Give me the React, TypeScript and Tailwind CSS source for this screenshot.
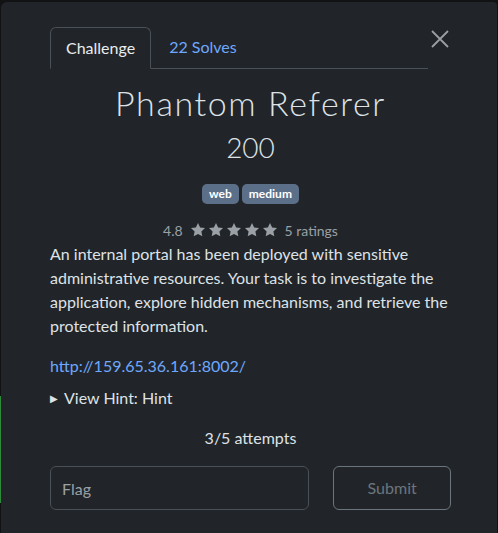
function Star() {
  return (
    <svg width="16" height="16" viewBox="0 0 24 24" className="fill-[#9aa0a6]">
      <path d="M12 1.5l3.2 6.7 7.3.9-5.4 5.1 1.4 7.3L12 17.9l-6.5 3.6 1.4-7.3-5.4-5.1 7.3-.9z" />
    </svg>
  );
}

export default function App() {
  return (
    <div className="w-[498px] h-[533px] bg-[#101214] relative overflow-hidden font-['Lato','Liberation_Sans',sans-serif]">
      {/* green bar from the page behind */}
      <div className="absolute left-0 top-[396px] w-[3px] h-[107px] bg-[#2e8b3a]" />

      <div className="absolute left-[1px] top-[2px] right-[1px] bottom-0 bg-[#212529] rounded-tl-md rounded-tr-sm text-[#dee2e6]">
        {/* Close */}
        <button className="absolute left-[430px] top-[28px]">
          <svg width="18" height="18" viewBox="0 0 18 18" className="stroke-[#9a9fa4]" strokeWidth="1.8">
            <path d="M1 1L17 17M17 1L1 17" />
          </svg>
        </button>

        <div className="pl-[49px] pr-[46px] pt-[24px]">
          {/* Tabs */}
          <div className="flex items-end border-b border-[#495057] w-[378px]">
            <div className="h-[42px] px-[15px] flex items-center border border-[#495057] border-b-[#212529] rounded-t-md -mb-px text-[16px] text-[#e9ecef]">
              Challenge
            </div>
            <div className="h-[42px] px-[18px] flex items-center text-[16px] text-[#6ea8fe]">22 Solves</div>
          </div>

          {/* Title */}
          <div className="text-center mt-[14px]">
            <h1 className="text-[34px] leading-[40px] font-light tracking-[1.6px] text-[#dee2e6]">Phantom Referer</h1>
            <h2 className="text-[28px] leading-[34px] font-light mt-[7px] text-[#dee2e6]">200</h2>
          </div>

          {/* Tags */}
          <div className="flex justify-center gap-[3px] mt-[20px]">
            <span className="bg-[#5c6f89] text-white text-[12px] font-bold rounded-[5px] px-[7px] h-[20px] flex items-center">web</span>
            <span className="bg-[#5c6f89] text-white text-[12px] font-bold rounded-[5px] px-[7px] h-[20px] flex items-center">medium</span>
          </div>

          {/* Rating */}
          <div className="flex justify-center items-center h-[20px] mt-[16px] text-[14px] text-[#9aa0a6] gap-[6px]">
            <span className="mr-[1px]">4.8</span>
            <div className="flex gap-[2px]">
              <Star />
              <Star />
              <Star />
              <Star />
              <Star />
            </div>
            <span className="ml-[1px]">5 ratings</span>
          </div>

          {/* Description */}
          <p className="text-[16px] leading-[24px] mt-[2px] text-[#dee2e6]">
            An internal portal has been deployed with sensitive administrative resources. Your task is to
            investigate the application, explore hidden mechanisms, and retrieve the protected information.
          </p>

          <p className="mt-[16px] text-[16px] leading-[24px]">
            <a className="text-[#6ea8fe]">http://159.65.36.161:8002/</a>
          </p>

          <div className="mt-[8px] flex items-center text-[16px] leading-[24px]">
            <span className="text-[10px] mr-[6px]">▶</span>
            View Hint: Hint
          </div>

          <div className="text-center text-[16px] leading-[24px] mt-[16px]">3/5 attempts</div>

          {/* Flag form */}
          <div className="flex gap-[24px] mt-[16px]">
            <input
              placeholder="Flag"
              className="w-[260px] h-[44px] rounded-md border border-[#495057] bg-[#212529] px-[11px] text-[16px] placeholder:text-[#9aa0a6] outline-none"
            />
            <button className="w-[118px] h-[44px] rounded-md border border-[#6c757d] text-[16px] text-[#6c757d]">
              Submit
            </button>
          </div>
        </div>
      </div>
    </div>
  );
}
